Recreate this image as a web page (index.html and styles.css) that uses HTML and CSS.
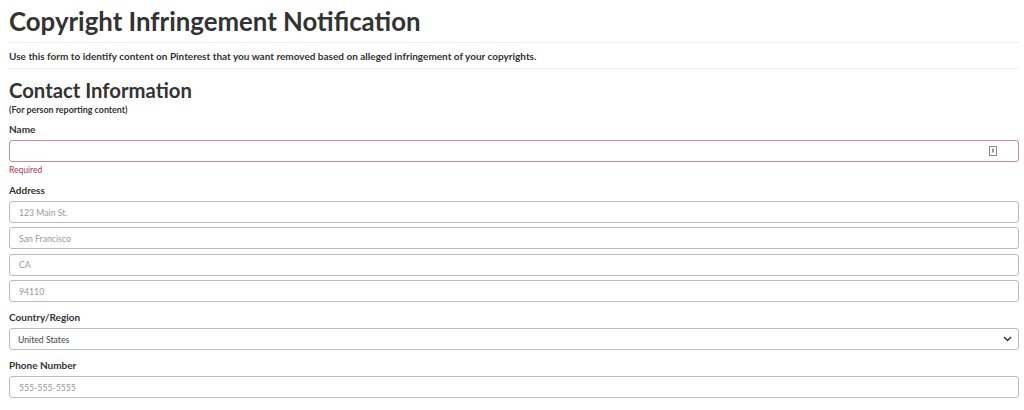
FILE: index.html
```html
<!DOCTYPE html>
<html lang="en">
<head>
    <meta charset="UTF-8">
    <title>Copyright Infringement Notification</title>
    <link rel="stylesheet" href="styles.css">
</head>
<body>

<h1 class="page-title">Copyright Infringement Notification</h1>
<p class="intro">Use this form to identify content on Pinterest that you want removed based on alleged infringement of your copyrights.</p>

<h2 class="section-title">Contact Information</h2>
<div class="section-note">(For person reporting content)</div>

<div class="field">
    <label class="field-label">Name</label>
    <div class="input-wrap">
        <input type="text" class="text-input error">
        <!-- иконка менеджера паролей -->
        <svg class="fill-icon" width="8" height="10" viewBox="0 0 8 10"><rect x="0.5" y="0.5" width="7" height="9" fill="none" stroke="#888"/><rect x="3" y="2.5" width="2" height="4" fill="#999"/></svg>
    </div>
    <div class="error-text">Required</div>
</div>

<div class="field">
    <label class="field-label">Address</label>
    <div class="stack">
        <input type="text" class="text-input" placeholder="123 Main St.">
        <input type="text" class="text-input" placeholder="San Francisco">
        <input type="text" class="text-input" placeholder="CA">
        <input type="text" class="text-input" placeholder="94110">
    </div>
</div>

<div class="field">
    <label class="field-label">Country/Region</label>
    <div class="select-wrap">
        <select class="text-input select">
            <option>United States</option>
        </select>
        <svg class="chevron" width="9" height="6" viewBox="0 0 9 6"><path d="M1 1l3.5 3.5L8 1" fill="none" stroke="#333" stroke-width="1.5"/></svg>
    </div>
</div>

<div class="field">
    <label class="field-label">Phone Number</label>
    <input type="text" class="text-input" placeholder="555-555-5555">
</div>

<div class="field">
    <label class="field-label">Email Address</label>
    <input type="text" class="text-input">
</div>

</body>
</html>
```

FILE: styles.css
```css
body {
    font-family: Lato, "Open Sans", sans-serif;
    color: #333;
    margin: 0;
    padding: 0 5px 0 9px;
    background-color: #fff;
}
.page-title {
    font-size: 25.8px;
    font-weight: 700;
    margin: 0;
    padding-top: 3px;
    line-height: 36px;
}
.intro {
    font-size: 10px;
    font-weight: 700;
    margin: 3px 0 0;
    padding: 7px 0 5px;
    border-top: 1px solid #eee;
    border-bottom: 1px solid #eee;
    line-height: 13px;
}
.section-title {
    font-size: 20.3px;
    font-weight: 700;
    margin: 8px 0 0;
    line-height: 26px;
}
.section-note {
    font-size: 8.9px;
    font-weight: 700;
    line-height: 10px;
    margin: 2px 0 -1px;
}
.field {
    margin-top: 9px;
}
.field-label {
    display: block;
    font-size: 10px;
    font-weight: 700;
    line-height: 13px;
    margin-bottom: 4px;
}
.input-wrap,
.select-wrap {
    position: relative;
}
.text-input {
    display: block;
    box-sizing: border-box;
    width: 100%;
    height: 22px;
    padding: 0 9px;
    font-family: inherit;
    font-size: 8.7px;
    color: #555;
    border: 1px solid #bbb;
    border-radius: 3px;
    background: #fff;
}
.text-input::placeholder {
    color: #999;
}
.text-input.error {
    border-color: #c98a97;
}
.fill-icon {
    position: absolute;
    right: 22px;
    top: 6px;
}
.error-text {
    color: #a8334c;
    font-size: 8.5px;
    line-height: 10px;
    margin-top: 3px;
}
.stack {
    display: flex;
    flex-direction: column;
    gap: 4.4px;
}
.select {
    appearance: none;
    -webkit-appearance: none;
    padding-left: 8px;
    color: #444;
}
.chevron {
    position: absolute;
    right: 7px;
    top: 8px;
}
```
